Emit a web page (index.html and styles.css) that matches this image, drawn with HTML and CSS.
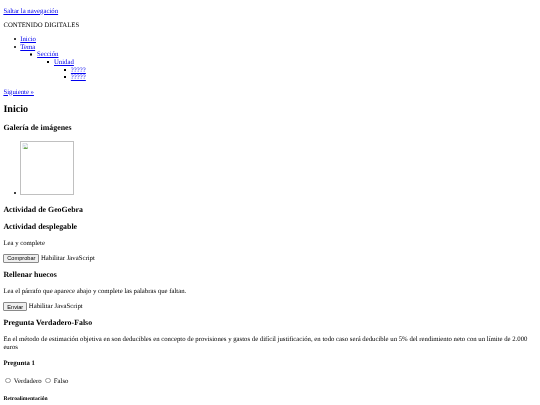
FILE: index.html
```html
<!DOCTYPE html>
<html lang="es">
<head>
<meta charset="utf-8">
<title>Inicio</title>
<link rel="stylesheet" href="styles.css">
</head>
<body>
<a href="#contenido">Saltar la navegación</a>
<p>CONTENIDO DIGITALES</p>
<nav>
  <ul class="list list-disc">
    <li><a href="#">Inicio</a></li>
    <li><a href="#">Tema</a>
      <ul class="list list-circle">
        <li><a href="#">Sección</a>
          <ul class="list list-square">
            <li><a href="#">Unidad</a>
              <ul class="list list-square">
                <li><a href="#">?????</a></li>
                <li><a href="#">?????</a></li>
              </ul>
            </li>
          </ul>
        </li>
      </ul>
    </li>
  </ul>
</nav>
<p><a href="#">Siguiente »</a></p>
<main id="contenido">
  <h2>Inicio</h2>
  <h3>Galería de imágenes</h3>
  <ul class="list list-disc gallery">
    <li><span class="broken-image"><svg class="broken-icon" viewBox="0 0 16 16" aria-hidden="true">
          <path d="M2 1h9l3 3v11H2z" fill="#f4f5f7" stroke="#b4b8bf"/>
          <path d="M11 1v3h3" fill="#dfe2e8" stroke="#b4b8bf"/>
          <path d="M3 14l4-5 3 3 3-3v5z" fill="#6aa84f"/>
          <path d="M3 5h5v3H3z" fill="#c6d6ee"/>
        </svg></span></li>
  </ul>
  <h3 class="tight-after">Actividad de GeoGebra</h3>
  <h3>Actividad desplegable</h3>
  <p>Lea y complete</p>
  <p class="control-line"><button type="button">Comprobar</button> Habilitar JavaScript</p>
  <h3>Rellenar huecos</h3>
  <p>Lea el párrafo que aparece abajo y complete las palabras que faltan.</p>
  <p class="control-line"><button type="button">Enviar</button> Habilitar JavaScript</p>
  <h3>Pregunta Verdadero-Falso</h3>
  <p>En el método de estimación objetiva en son deducibles en concepto de provisiones y gastos de difícil justificación, en todo caso será deducible un 5% del rendimiento neto con un límite de 2.000 euros</p>
  <h4>Pregunta 1</h4>
  <p><input type="radio" name="p1" id="v"> <label for="v">Verdadero</label> <input type="radio" name="p1" id="f"> <label for="f">Falso</label></p>
  <h5>Retroalimentación</h5>
</main>
</body>
</html>
```
FILE: styles.css
```css
html {
  background: #fff;
}
body {
  margin: 7.6px 3.375px 0;
  font-family: "Liberation Serif", serif;
  font-size: 6.75px;
  line-height: 7.6px;
  color: #000;
  text-rendering: geometricPrecision;
  filter: blur(0.34px);
}
a {
  color: #0000ee;
  text-decoration-thickness: 0.42px;
  text-underline-offset: 0.9px;
}
h2 {
  margin: 8px 0 8.9px;
  line-height: 11.39px;
}
h3 { line-height: 8.86px; }
h4 { margin-bottom: 8.4px; }
h5 {
  margin-top: 9.9px;
  line-height: 6.33px;
}

.list {
  margin: 1em 0;
  padding-left: 2.5em;
  list-style: none;
}
.list .list {
  margin: 0;
}
.list > li::before {
  content: "";
  display: inline-block;
  box-sizing: border-box;
  width: 2.1px;
  height: 2.1px;
  margin-left: -6.75px;
  margin-right: 4.65px;
  vertical-align: 0.9px;
  background: #000;
}
.list-disc > li::before {
  border-radius: 50%;
}
.list-circle > li::before {
  border: 0.42px solid #000;
  border-radius: 50%;
  background: transparent;
}
.gallery {
  margin-bottom: 7.4px;
}
.tight-after {
  margin-bottom: 8.4px;
}

.broken-image {
  display: inline-block;
  box-sizing: border-box;
  width: 54px;
  height: 54px;
  padding: 0.42px;
  border: 0.42px solid #c0c0c0;
}
.broken-icon {
  display: block;
  width: 6.75px;
  height: 6.75px;
}

.control-line {
  line-height: 9px;
}
button {
  box-sizing: border-box;
  height: 8.86px;
  padding: 0 2.95px;
  border: 0.42px solid #8a8a8a;
  border-radius: 1px;
  background: #efefef;
  color: #000;
  font-family: "Liberation Sans", sans-serif;
  font-size: 5.625px;
  line-height: 6.33px;
}
input[type="radio"] {
  appearance: none;
  box-sizing: border-box;
  width: 5.48px;
  height: 5.48px;
  margin: 1.27px 1.27px 0 2.11px;
  border: 0.42px solid #999;
  border-radius: 50%;
  background: #fff;
}
```
